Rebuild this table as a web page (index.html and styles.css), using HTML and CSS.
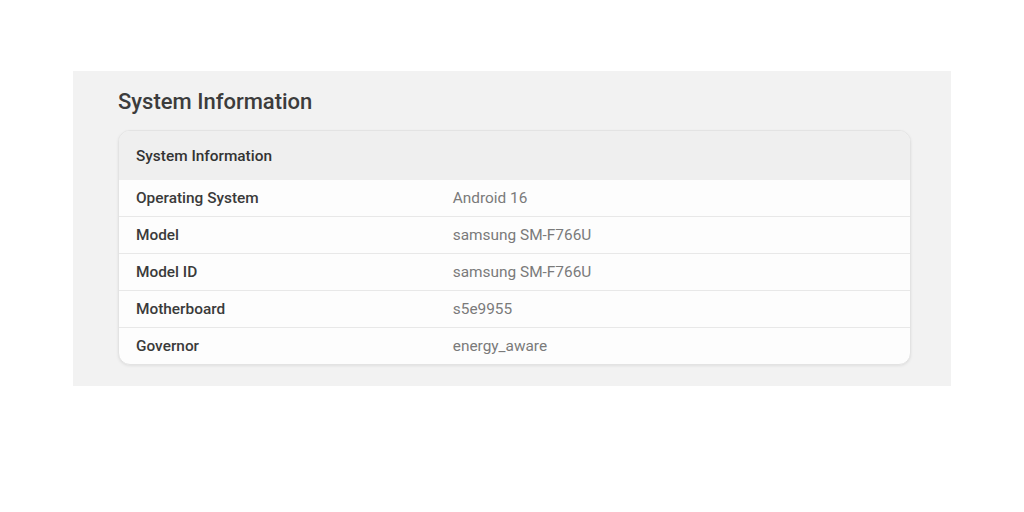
FILE: index.html
```html
<!DOCTYPE html>
<html>
<head>
<meta charset="utf-8">
<link rel="stylesheet" href="styles.css">
</head>
<body>
<section class="panel">
  <h1 class="title">System Information</h1>
  <div class="card">
    <div class="card-head">System Information</div>
    <div class="row"><div class="label">Operating System</div><div class="value">Android 16</div></div>
    <div class="row"><div class="label">Model</div><div class="value">samsung SM-F766U</div></div>
    <div class="row"><div class="label">Model ID</div><div class="value">samsung SM-F766U</div></div>
    <div class="row"><div class="label">Motherboard</div><div class="value">s5e9955</div></div>
    <div class="row"><div class="label">Governor</div><div class="value">energy_aware</div></div>
  </div>
</section>
</body>
</html>
```
FILE: styles.css
```css
html, body {
  margin: 0;
  padding: 0;
  background: #ffffff;
  font-family: Roboto, "Liberation Sans", Arial, sans-serif;
}
.panel {
  box-sizing: border-box;
  margin: 71px 0 0 73px;
  width: 878px;
  height: 315px;
  background: #f2f2f2;
  padding: 19px 40px 0 45px;
}
.title {
  margin: 0 0 16px 0;
  font-size: 22px;
  line-height: 24px;
  font-weight: 500;
  color: #3c3c3c;
}
.card {
  background: #fdfdfd;
  border: 1px solid #e3e3e3;
  border-radius: 12px;
  overflow: hidden;
  box-shadow: 0 1px 3px rgba(0,0,0,0.08);
}
.card-head {
  height: 49px;
  display: flex;
  align-items: center;
  padding: 0 17px;
  background: #efefef;
  font-size: 15.4px;
  font-weight: 500;
  color: #333;
}
.row {
  display: grid;
  grid-template-columns: 42.2% 1fr;
  height: 37px;
  align-items: center;
  border-top: 1px solid #e8e8e8;
  box-sizing: border-box;
}
.card-head + .row {
  border-top: none;
  height: 36px;
}
.label {
  padding-left: 17px;
  font-size: 15.4px;
  font-weight: 500;
  color: #3a3a3a;
}
.value {
  font-size: 15.4px;
  color: #7a7a7a;
}
```
